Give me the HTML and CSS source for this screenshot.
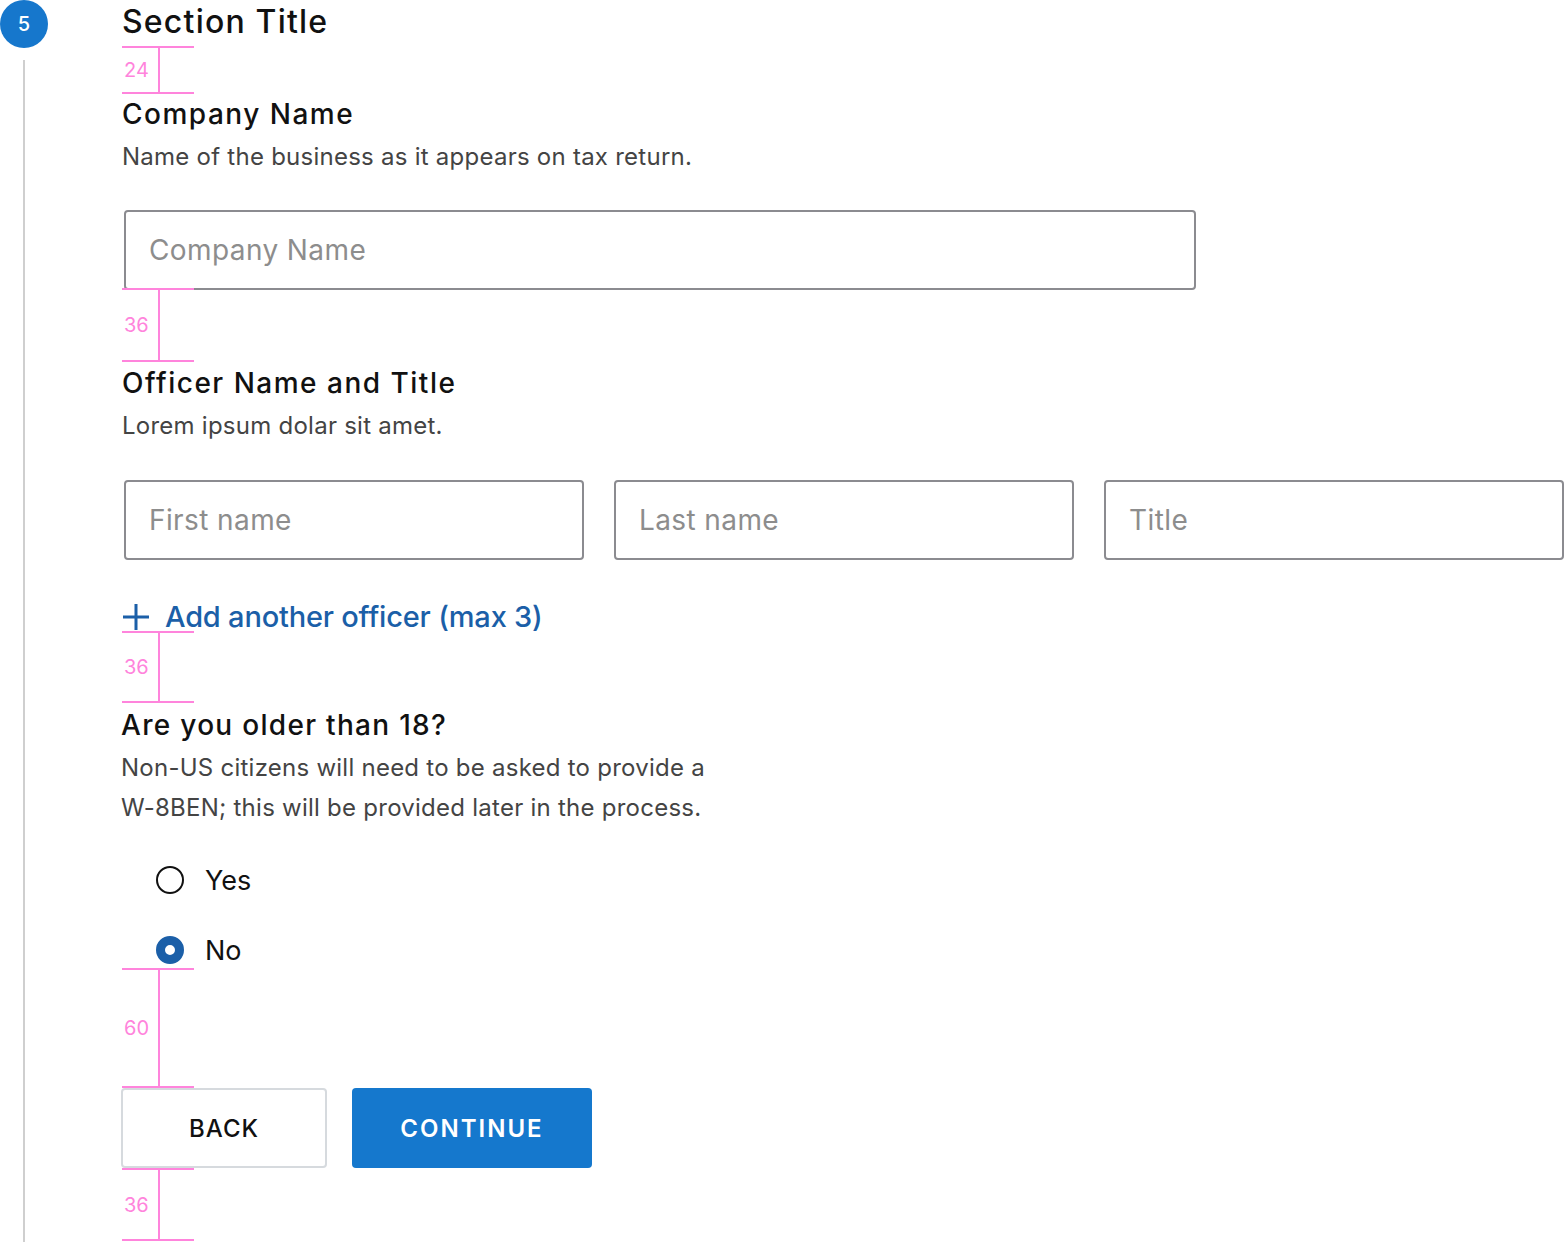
FILE: index.html
```html
<!DOCTYPE html>
<html lang="en">
<head>
<meta charset="utf-8">
<title>Section Title</title>
<link rel="stylesheet" href="styles.css">
</head>
<body>
<div class="page">
  <div class="rail">
    <div class="badge">5</div>
    <div class="rail-line"></div>
  </div>
  <div class="content">
    <h1 class="section-title">Section Title</h1>

    <div class="spacer s24"><span class="spacer-label">24</span><span class="spacer-bar"></span></div>

    <div class="field first">
      <h2 class="field-title">Company Name</h2>
      <p class="field-desc">Name of the business as it appears on tax return.</p>
      <input class="input input-wide" type="text" placeholder="Company Name">
    </div>

    <div class="spacer s36a"><span class="spacer-label">36</span><span class="spacer-bar"></span></div>

    <div class="field">
      <h2 class="field-title">Officer Name and Title</h2>
      <p class="field-desc">Lorem ipsum dolar sit amet.</p>
      <div class="input-row">
        <input class="input" type="text" placeholder="First name">
        <input class="input" type="text" placeholder="Last name">
        <input class="input" type="text" placeholder="Title">
      </div>
      <a class="add-link" href="#">
        <svg class="plus" width="28" height="28" viewBox="0 0 28 28" aria-hidden="true"><path d="M14 1v26M1 14h26" stroke="currentColor" stroke-width="3" fill="none"/></svg>
        <span>Add another officer (max 3)</span>
      </a>
    </div>

    <div class="spacer s36b"><span class="spacer-label">36</span><span class="spacer-bar"></span></div>

    <div class="field">
      <h2 class="field-title q">Are you older than 18?</h2>
      <p class="field-desc q">Non-US citizens will need to be asked to provide a<br>W-8BEN; this will be provided later in the process.</p>
      <div class="radios">
        <label class="radio"><span class="radio-dot"></span><span>Yes</span></label>
        <label class="radio checked"><span class="radio-dot"></span><span>No</span></label>
      </div>
    </div>

    <div class="spacer s60"><span class="spacer-label">60</span><span class="spacer-bar"></span></div>

    <div class="buttons">
      <button class="btn btn-back" type="button">BACK</button>
      <button class="btn btn-continue" type="button">CONTINUE</button>
    </div>

    <div class="spacer s36c"><span class="spacer-label">36</span><span class="spacer-bar"></span></div>
  </div>
</div>
</body>
</html>
```

FILE: styles.css
```css
* { box-sizing: border-box; }
html, body { margin: 0; padding: 0; background: #fff; }
body {
  font-family: "Inter", "Lato", sans-serif;
  color: #111;
  width: 1564px;
  height: 1242px;
  overflow: hidden;
}
.page { display: flex; height: 1242px; }
.rail {
  width: 48px;
  display: flex;
  flex-direction: column;
  align-items: center;
}
.badge {
  width: 48px; height: 48px; border-radius: 50%;
  background: #1677cc; color: #fff;
  display: flex; align-items: center; justify-content: center;
  font-size: 20px; font-weight: 500;
}
.rail-line {
  margin-top: 12px;
  flex: 1;
  width: 2px;
  background: #cfcfcf;
}
.content {
  margin-left: 74px;
  width: 1442px;
  display: flex;
  flex-direction: column;
}
.section-title {
  margin: 0;
  font-size: 32px;
  font-weight: 500;
  letter-spacing: 1.2px;
  line-height: 44px;
  height: 46px;
}
.spacer {
  position: relative;
  width: 72px;
  flex: none;
  border-top: 2px solid #ff84dc;
  border-bottom: 2px solid #ff84dc;
  display: flex;
  align-items: center;
}
.spacer-bar {
  position: absolute;
  left: 36px; top: 0; bottom: 0;
  width: 2px;
  background: #ff84dc;
}
.spacer-label {
  margin-left: 2px;
  font-size: 20px;
  color: #ff84dc;
  line-height: 1;
}
.s24 { height: 48px; }
.s36a { height: 74px; margin-top: -2px; }
.s36b { height: 72px; }
.s60 { height: 120px; }
.s36c { height: 73px; }

.field { display: flex; flex-direction: column; }
.field.first { margin-top: -1px; }
.field-title {
  margin: 0;
  font-size: 28px;
  font-weight: 500;
  letter-spacing: 1.5px;
  line-height: 42px;
}
.field-desc {
  margin: 2px 0 0;
  font-size: 24px;
  letter-spacing: 0.25px;
  line-height: 40px;
  color: #444;
}
.field-title.q { margin-left: -1px; margin-top: 1px; letter-spacing: 1.3px; }
.field-desc.q { margin-left: -1px; }
.input {
  margin: 33px 0 0 2px;
  height: 80px;
  border: 2px solid #8b8b90;
  border-radius: 4px;
  padding: 0 23px;
  font-family: inherit;
  font-size: 28px;
  letter-spacing: 0.4px;
  color: #111;
  background: #fff;
  outline: none;
}
.input::placeholder { color: #8d8d8d; }
.input-wide { width: 1072px; }
.input-row {
  display: flex;
  gap: 30px;
  margin-left: 2px;
  margin-top: 34px;
}
.input-row .input { margin: 0; width: 460px; }
.add-link {
  margin-top: 42px;
  display: flex;
  align-items: center;
  gap: 15px;
  color: #1b5fa8;
  text-decoration: none;
  font-size: 29px;
  font-weight: 500;
  letter-spacing: -0.2px;
  line-height: 30px;
  height: 29px;
}
.plus { flex: none; }
.radios {
  margin-top: 34px;
  margin-left: 34px;
  display: flex;
  flex-direction: column;
  gap: 34px;
}
.radio {
  display: flex;
  align-items: center;
  gap: 21px;
  height: 36px;
  font-size: 27px;
  color: #111;
}
.radio-dot {
  width: 28px; height: 28px;
  border-radius: 50%;
  border: 2px solid #111;
  flex: none;
}
.radio.checked .radio-dot {
  border: 9px solid #1b5fa8;
  background: #fff;
}
.buttons {
  display: flex;
  gap: 25px;
  margin-left: -1px;
  flex: none;
}
.btn {
  height: 80px;
  border-radius: 4px;
  font-family: inherit;
  font-size: 24px;
  letter-spacing: 1px;
  cursor: pointer;
}
.btn-back {
  width: 206px;
  background: #fff;
  border: 2px solid #d6dade;
  color: #111;
  font-weight: 500;
}
.btn-continue {
  width: 240px;
  background: #1578cd;
  border: none;
  color: #fff;
  font-weight: 600;
  letter-spacing: 2px;
}
```
